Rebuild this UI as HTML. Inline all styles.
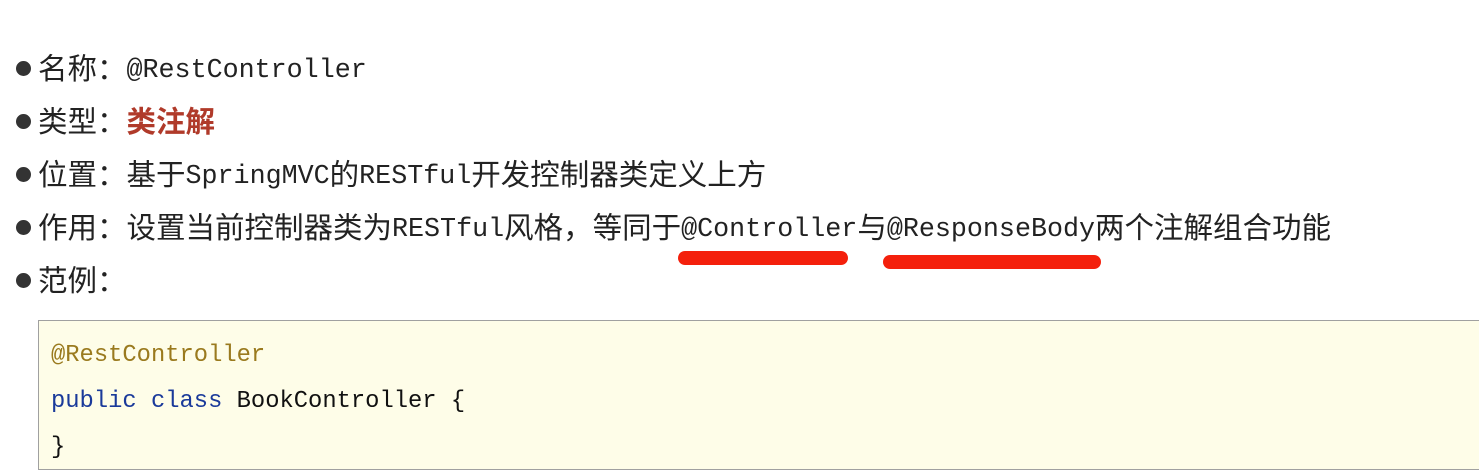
<!DOCTYPE html>
<html><head><meta charset="utf-8"><style>
body{margin:0;width:1479px;height:472px;background:#fff;position:relative;overflow:hidden}
.l{position:absolute;left:38px;font-family:"Liberation Mono","Noto Sans CJK SC",monospace;font-size:26.7px;color:#222;white-space:nowrap;line-height:36px}
.l .m{position:relative;top:-2px}
.l .c{font-family:"Noto Sans CJK SC",sans-serif;font-size:29.5px}
.b{position:absolute;left:16px;width:15px;height:15px;border-radius:50%;background:#333}
.red{color:#b03a2a;font-weight:bold}
.box{position:absolute;left:38px;top:320px;width:1450px;height:148px;border:1px solid #a0a0a0;background:#fefde8}
.code{position:absolute;left:51px;font-family:"Liberation Mono",monospace;font-size:23.8px;line-height:30px;white-space:nowrap;color:#111}
.u{position:absolute;height:14px;border-radius:7px;background:#f4200c}
</style></head><body>
<div class="b" style="top:61px"></div>
<div class="l" style="top:49px"><span class="c">名称：</span><span class="m">@RestController</span></div>
<div class="b" style="top:114px"></div>
<div class="l" style="top:102px"><span class="c">类型：</span><span class="c red">类注解</span></div>
<div class="b" style="top:167px"></div>
<div class="l" style="top:155px"><span class="c">位置：基于</span><span class="m">SpringMVC</span><span class="c">的</span><span class="m">RESTful</span><span class="c">开发控制器类定义上方</span></div>
<div class="b" style="top:220px"></div>
<div class="l" style="top:208px"><span class="c">作用：设置当前控制器类为</span><span class="m">RESTful</span><span class="c">风格，等同于</span><span class="m">@Controller</span><span class="c">与</span><span class="m">@ResponseBody</span><span class="c">两个注解组合功能</span></div>
<div class="b" style="top:273px"></div>
<div class="l" style="top:261px"><span class="c">范例：</span></div>
<div class="u" style="left:678px;top:251px;width:170px"></div>
<div class="u" style="left:883px;top:255px;width:218px"></div>
<div class="box"></div>
<div class="code" style="top:341px;color:#9a7a1e">@RestController</div>
<div class="code" style="top:387px"><span style="color:#1a3a9a">public class</span> BookController {</div>
<div class="code" style="top:433px">}</div>
</body></html>
